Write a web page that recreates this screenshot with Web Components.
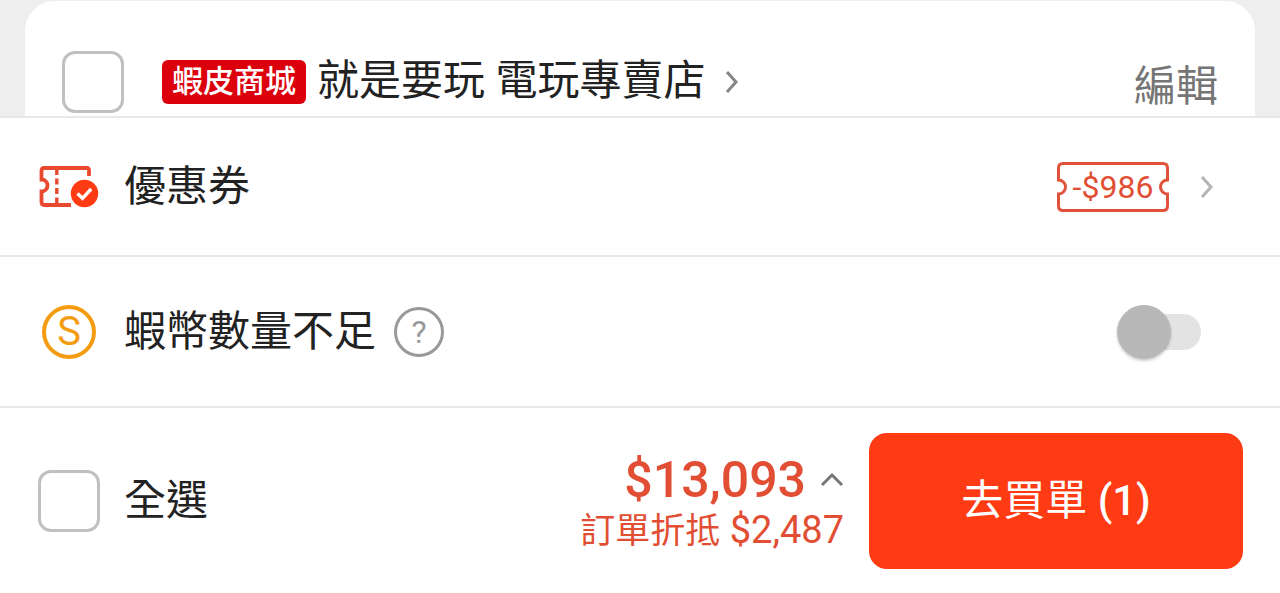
<!DOCTYPE html>
<html lang="zh-Hant">
<head>
<meta charset="utf-8">
<meta name="viewport" content="width=device-width, initial-scale=1">
<title>購物車</title>
<style>
  html { background: #fff; }
  body {
    margin: 0;
    font-family: Roboto, "Noto Sans CJK TC", sans-serif;
    font-size: 42px;
    line-height: 50px;
    color: #222;
    --accent: #e24e33;
    --solid: #ff3b14;
    --line: #e8e8e8;
  }
</style>
</head>
<body>
<cart-page>
  <shop-card slot="shop" name="就是要玩 電玩專賣店" badge="蝦皮商城" action="編輯"></shop-card>
  <cart-row>
    <coupon-icon slot="icon"></coupon-icon>
    優惠券
    <coupon-tag slot="end">-$986</coupon-tag>
    <chevron-icon slot="end"></chevron-icon>
  </cart-row>
  <cart-row class="tall">
    <coin-icon slot="icon"></coin-icon>
    蝦幣數量不足
    <help-button slot="after"></help-button>
    <toggle-switch slot="end" label="使用蝦幣"></toggle-switch>
  </cart-row>
  <checkout-bar slot="footer" total="$13,093" saved="$2,487" count="1"></checkout-bar>
</cart-page>

<script>
  function define(name, render) {
    customElements.define(name, class extends HTMLElement {
      constructor() {
        super();
        this.attachShadow({ mode: "open" });
      }
      connectedCallback() {
        this.shadowRoot.innerHTML = render(this);
      }
    });
  }

  define("cart-page", () => `
    <style>
      :host { display: block; }
      main { display: flex; flex-direction: column; }
    </style>
    <main>
      <slot name="shop"></slot>
      <slot></slot>
      <slot name="footer"></slot>
    </main>`);

  define("check-box", el => `
    <style>
      :host { display: block; }
      label { display: flex; align-items: center; gap: 24px; cursor: pointer; }
      input {
        appearance: none; box-sizing: border-box; flex: none;
        width: 62px; height: 62px; margin: 0;
        border: 3px solid #c0c0c0; border-radius: 13px; background: #fff;
      }
      input:checked { background: var(--solid); border-color: var(--solid); }
    </style>
    <label><input type="checkbox"${el.hasAttribute("label") ? ` aria-label="${el.getAttribute("label")}"` : ""}><slot></slot></label>`);

  define("mall-badge", () => `
    <style>
      :host {
        display: block; padding: 0 10px; border-radius: 6px;
        background: #dc000c; color: #fff;
        font-size: 31px; font-weight: 500; line-height: 44px;
      }
    </style>
    <slot></slot>`);

  define("chevron-icon", () => `
    <style>
      :host { display: block; color: #b4b4b4; }
      svg { display: block; }
    </style>
    <svg width="14" height="24" viewBox="0 0 14 24" fill="none" stroke="currentColor" stroke-width="3" aria-hidden="true">
      <path d="M2 2 11 12 2 22"/>
    </svg>`);

  define("shop-card", el => `
    <style>
      :host { display: block; background: #eee; padding: 1px 25px 0; border-bottom: 2px solid var(--line); }
      section {
        display: flex; align-items: center; padding: 50px 37px 3px;
        border-radius: 30px 30px 0 0; background: #fff;
      }
      mall-badge { margin-left: 38px; }
      a { display: flex; align-items: center; gap: 20px; margin-left: 11px; color: inherit; text-decoration: none; }
      .name { padding-bottom: 2px; }
      chevron-icon { color: #858585; }
      button {
        margin: 10px 0 0 auto; padding: 0; border: 0; background: none;
        font: inherit; color: #757575; cursor: pointer;
      }
    </style>
    <section>
      <check-box label="${el.getAttribute("name")}"></check-box>
      <mall-badge>${el.getAttribute("badge")}</mall-badge>
      <a href="#shop"><span class="name">${el.getAttribute("name")}</span><chevron-icon></chevron-icon></a>
      <button type="button">${el.getAttribute("action")}</button>
    </section>`);

  define("cart-row", () => `
    <style>
      :host { display: block; border-bottom: 2px solid var(--line); }
      .row { display: flex; align-items: center; min-height: 137px; padding: 0 66px 0 38px; }
      :host(.tall) .row { min-height: 149px; padding-right: 79px; }
      .icon { display: flex; justify-content: center; width: 62px; margin-right: 24px; }
      .end { display: flex; align-items: center; gap: 31px; margin-left: auto; }
      .after { margin-left: 18px; }
    </style>
    <div class="row">
      <span class="icon"><slot name="icon"></slot></span>
      <span><slot></slot></span>
      <span class="after"><slot name="after"></slot></span>
      <span class="end"><slot name="end"></slot></span>
    </div>`);

  define("coupon-icon", () => `
    <style>
      :host { display: block; }
      svg { display: block; }
    </style>
    <svg width="62" height="44" viewBox="0 0 62 44" fill="none" stroke="#e9492e" stroke-width="3.8" aria-hidden="true">
      <path d="M51 11V5Q51 3 49 3H6Q3.500 3 3.500 5.500V14.500A6 6 0 0 1 3.500 26.500V37Q3.500 40 6.500 40H33"/>
      <path d="M18.800 4V40" stroke-width="3.400" stroke-dasharray="6 3.500"/>
      <circle cx="46.500" cy="28.500" r="13.700" fill="#ff3b14" stroke="none"/>
      <path d="M39.500 28.500 44.500 33.300 53.200 24" stroke="#fff" stroke-width="3.400"/>
    </svg>`);

  define("coupon-tag", () => `
    <style>
      :host { display: grid; place-items: center; width: 112px; color: var(--accent); font-size: 32px; line-height: 50px; }
      svg, span { grid-area: 1 / 1; }
      svg { display: block; }
    </style>
    <svg width="112" height="50" viewBox="0 0 112 50" fill="none" stroke="#e0533a" stroke-width="3" aria-hidden="true">
      <path d="M6 1.500H106Q110.500 1.500 110.500 6V18A7 7 0 0 0 110.500 32V44Q110.500 48.500 106 48.500H6Q1.500 48.500 1.500 44V32A7 7 0 0 0 1.500 18V6Q1.500 1.500 6 1.500Z"/>
    </svg>
    <span><slot></slot></span>`);

  define("coin-icon", () => `
    <style>
      :host {
        display: block; box-sizing: border-box; width: 54px; height: 54px;
        border: 4px solid #f39c12; border-radius: 50%;
        color: #f39c12; font-size: 40px; line-height: 46px; text-align: center;
      }
    </style>
    <span aria-hidden="true">S</span>`);

  define("help-button", () => `
    <style>
      :host { display: block; }
      button {
        display: block; box-sizing: border-box; width: 50px; height: 50px; padding: 0;
        border: 3px solid #999; border-radius: 50%; background: none;
        color: #999; font: inherit; font-size: 32px; line-height: 44px; cursor: pointer;
      }
    </style>
    <button type="button" aria-label="說明">?</button>`);

  define("toggle-switch", el => `
    <style>
      :host { display: block; }
      input {
        appearance: none; display: grid; align-items: center;
        width: 84px; height: 54px; margin: 0; cursor: pointer;
      }
      input::before, input::after { content: ""; grid-area: 1 / 1; }
      input::before { height: 36px; margin-left: 8px; border-radius: 18px; background: #e3e3e3; }
      input::after { width: 54px; height: 54px; border-radius: 50%; background: #b8b8b8; box-shadow: 0 2px 3px #0003; }
      input:checked::after { justify-self: end; }
    </style>
    <input type="checkbox" role="switch" aria-label="${el.getAttribute("label")}">`);

  define("checkout-bar", el => `
    <style>
      :host { display: block; }
      footer { display: flex; align-items: center; padding: 25px 37px 24px 38px; }
      .sum { margin-left: auto; margin-right: 25px; padding-top: 8px; text-align: right; color: var(--accent); }
      .total {
        display: flex; align-items: center; justify-content: flex-end; gap: 14px; width: 100%;
        padding: 0; border: 0; background: none; color: inherit;
        font: inherit; font-size: 50px; font-weight: 500; line-height: 52px; cursor: pointer;
      }
      svg { display: block; }
      .saved { font-size: 35px; line-height: 48px; white-space: pre; }
      .saved b { font-size: 38px; font-weight: 400; }
      .pay {
        width: 374px; height: 136px; padding: 0; border: 0; border-radius: 18px;
        background: var(--solid); color: #fff; font: inherit; font-weight: 500; cursor: pointer;
      }
      .pay span { font-weight: 400; }
    </style>
    <footer>
      <check-box>全選</check-box>
      <div class="sum">
        <button class="total" type="button">${el.getAttribute("total")}<svg width="24" height="16" viewBox="0 0 24 16" fill="none" stroke="#777" stroke-width="3" aria-hidden="true"><path d="M2 13 12 3 22 13"/></svg></button>
        <div class="saved">訂單折抵<b> ${el.getAttribute("saved")}</b></div>
      </div>
      <button class="pay" type="button"><span>去買單</span> (${el.getAttribute("count")})</button>
    </footer>`);
</script>
</body>
</html>
